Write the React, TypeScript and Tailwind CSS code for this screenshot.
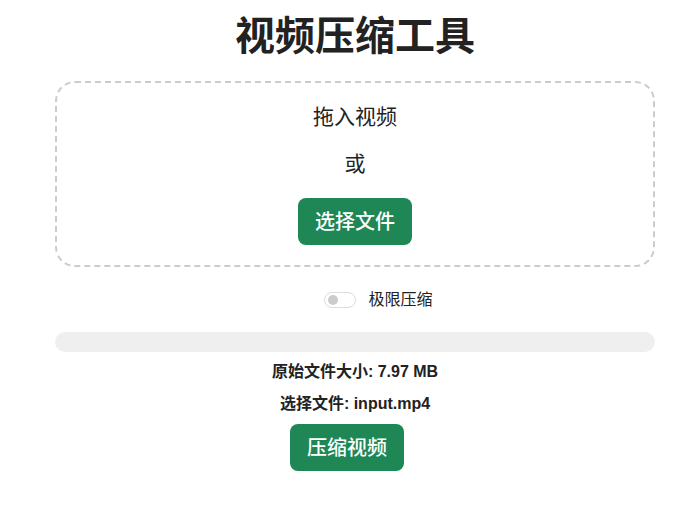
import React, { useState } from 'react'

const font = { fontFamily: '"Liberation Sans", "Noto Sans CJK SC", sans-serif' }

export default function App() {
  const [extreme, setExtreme] = useState(false)

  return (
    <div className="min-h-screen bg-white pl-[13px] text-[#222]" style={font}>
      <div className="mx-auto flex w-[600px] flex-col items-center">
        <h1 className="mt-3 text-[40px] font-bold leading-[48px] text-[#222]">视频压缩工具</h1>

        <div className="mt-[21px] flex w-full flex-col items-center gap-[21px] rounded-[20px] border-2 border-dashed border-[#ccc] px-5 pt-[21px] pb-5">
          <p className="text-[21px] leading-[26px] text-[#222]">拖入视频</p>
          <p className="text-[21px] leading-[26px] text-[#222]">或</p>
          <button className="h-[47px] rounded-lg bg-[#1e8755] px-[17px] text-[20px] font-medium text-white">
            选择文件
          </button>
        </div>

        <label className="mt-[21px] ml-[47px] flex h-6 cursor-pointer items-center gap-3">
          <button
            onClick={() => setExtreme(!extreme)}
            className="relative h-4 w-8 rounded-full border border-[#ddd] bg-white"
          >
            <span className="absolute top-[2px] left-[3px] h-[10px] w-[10px] rounded-full bg-[#ccc]" />
          </button>
          <span className="text-[16px] text-[#222]">极限压缩</span>
        </label>

        <div className="mt-5 h-5 w-full rounded-full bg-[#efefef]" />

        <p className="mt-[9px] text-[16px] font-bold leading-[22px] text-[#222]">原始文件大小: 7.97 MB</p>
        <p className="mt-[10px] text-[16px] font-bold leading-[22px] text-[#222]">选择文件: input.mp4</p>

        <button className="mt-[9px] mr-4 h-[47px] rounded-lg bg-[#1e8755] px-[17px] text-[20px] font-medium text-white">
          压缩视频
        </button>
      </div>
    </div>
  )
}
